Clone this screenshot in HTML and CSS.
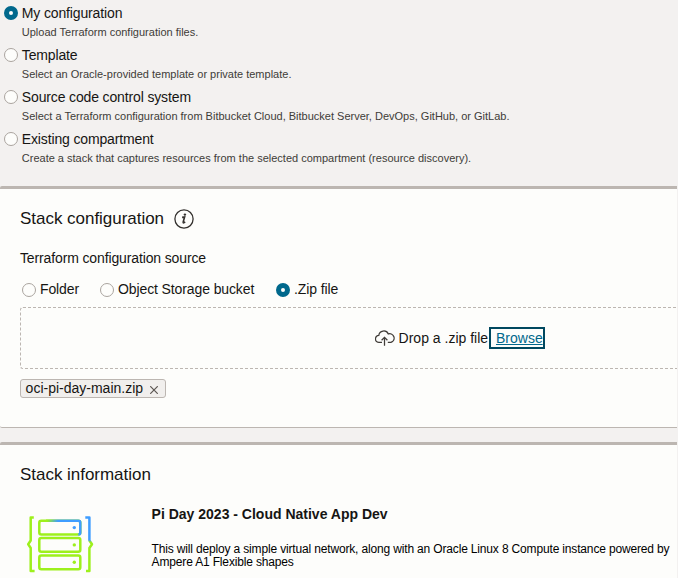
FILE: index.html
```
<!DOCTYPE html>
<html lang="en">
<head>
<meta charset="utf-8">
<title>Create stack</title>
<link rel="stylesheet" href="styles.css">
</head>
<body>
<main class="page">
  <section class="origins">
    <div class="origin"><span class="radio checked"></span><div><div class="name">My configuration</div><div class="hint">Upload Terraform configuration files.</div></div></div>
    <div class="origin"><span class="radio"></span><div><div class="name">Template</div><div class="hint">Select an Oracle-provided template or private template.</div></div></div>
    <div class="origin"><span class="radio"></span><div><div class="name">Source code control system</div><div class="hint">Select a Terraform configuration from Bitbucket Cloud, Bitbucket Server, DevOps, GitHub, or GitLab.</div></div></div>
    <div class="origin"><span class="radio"></span><div><div class="name">Existing compartment</div><div class="hint">Create a stack that captures resources from the selected compartment (resource discovery).</div></div></div>
  </section>
  <section class="card config">
    <div class="title-row">
      <h2 class="title">Stack configuration</h2>
      <svg class="info" width="20" height="20" viewBox="0 0 20 20"><circle cx="10" cy="10" r="9.1" fill="none" stroke="#34312e" stroke-width="1.3"/><path d="M8.1 8.4 10.6 8 9.2 13q-.2 1.1.6.8l1.4-1" fill="none" stroke="#34312e" stroke-width="1.6"/><circle cx="10.9" cy="5.6" r="1.2" fill="#34312e"/></svg>
    </div>
    <div class="label">Terraform configuration source</div>
    <div class="choices">
      <span class="choice folder"><span class="radio"></span><span>Folder</span></span>
      <span class="choice bucket"><span class="radio"></span><span>Object Storage bucket</span></span>
      <span class="choice zip"><span class="radio checked"></span><span>.Zip file</span></span>
    </div>
    <div class="drop">
      <svg class="cloud" width="20" height="16" viewBox="0 0 20 16" fill="none" stroke="#403c38" stroke-width="1.25"><path d="M7 12.4H4.1A3.5 3.5 0 0 1 3.8 5.4 5 5 0 0 1 13.3 3.9 4.3 4.3 0 0 1 16 12.4H12.8M9.5 15.8V7.4M6.6 10.2 9.5 7.3l2.9 2.9"/></svg>
      <span class="drop-text">Drop a .zip file</span><a class="browse" href="#">Browse</a>
    </div>
    <div class="chip"><span class="chip-name">oci-pi-day-main.zip</span><svg width="8" height="8" viewBox="0 0 8 8"><path d="M.2.2l7.6 7.6M7.8.2.2 7.8" stroke="#5c5752" stroke-width="1.2"/></svg></div>
  </section>
  <section class="card details">
    <h2 class="title">Stack information</h2>
    <div class="stack">
      <svg class="logo" width="68" height="58" viewBox="0 0 68 58" fill="none" stroke-linejoin="round">
        <defs>
          <linearGradient id="shelf" gradientUnits="userSpaceOnUse" x1="21" y1="5" x2="32" y2="5"><stop offset="0" stop-color="#9df01c"/><stop offset="1" stop-color="#3f9dff"/></linearGradient>
          <linearGradient id="brace" x1="0" y1="0" x2="0" y2="1"><stop offset=".42" stop-color="#3f9dff"/><stop offset=".46" stop-color="#9df01c"/></linearGradient>
        </defs>
        <g stroke="#9df01c" stroke-width="2.5">
          <path d="M7.8 2.5H4.7V25.5L2.2 29.3 4.7 33V56H8.6"/>
          <path d="M59.3 2.5H63.4V25.5L66 29.3 63.4 33V56H60" stroke="url(#brace)"/>
          <rect x="13.3" y="5.8" width="41" height="13.6" rx="2"/>
          <path d="M20 5.8H52.3Q54.3 5.8 54.3 7.8V17.4Q54.3 19.4 52.3 19.4" stroke="url(#shelf)"/>
          <rect x="13.3" y="23" width="41" height="13.8" rx="2"/>
          <rect x="13.3" y="40.5" width="41" height="13.8" rx="2"/>
        </g>
        <circle cx="48.3" cy="12.6" r="1.7" fill="#3f9dff"/><circle cx="48.3" cy="29.9" r="1.7" fill="#9df01c"/><circle cx="48.3" cy="47.3" r="1.7" fill="#9df01c"/>
      </svg>
      <div class="about">
        <h3 class="stack-name">Pi Day 2023 - Cloud Native App Dev</h3>
        <p class="summary">This will deploy a simple virtual network, along with an Oracle Linux 8 Compute instance powered by<br>Ampere A1 Flexible shapes</p>
      </div>
    </div>
  </section>
</main>
</body>
</html>
```
FILE: styles.css
```
* { box-sizing: border-box; }
body { margin: 0; background: #f3f1f0; color: #161513; font: 14px/20px "Liberation Sans", Arial, sans-serif; }
h2, h3, p { margin: 0; font-weight: normal; }
.page { width: 677px; height: 578px; overflow: hidden; }
.origins { height: 186px; padding: 3px 0 0 4px; }
.origin { display: flex; gap: 3.8px; height: 42px; }
.radio { flex: none; width: 14px; height: 14px; border: 1px solid #aaa49f; border-radius: 50%; background: #fdfdfb; }
.radio.checked { border: 5px solid #00688c; }
.origin .radio { margin-top: 3px; }
.name { height: 20px; letter-spacing: -0.14px; white-space: nowrap; }
.hint { height: 18px; font-size: 11px; line-height: 18px; color: #403c38; white-space: nowrap; }
.card { background: #fdfdfb; border-top: 3px solid #bcb6b1; padding-left: 20px; }
.config { height: 242px; border-bottom: 1px solid #bcb6b1; border-radius: 2px 0 0 2px; }
.title { font-size: 17px; line-height: 22px; letter-spacing: -0.03px; white-space: nowrap; }
.title-row { display: flex; align-items: center; gap: 10px; padding-top: 19px; height: 41px; }
.label { margin-top: 18px; height: 20px; letter-spacing: -0.13px; white-space: nowrap; }
.choices { display: flex; margin-top: 11px; height: 20px; padding-left: 2px; letter-spacing: -0.11px; }
.choice { display: flex; align-items: center; gap: 4px; white-space: nowrap; }
.folder { width: 78px; }
.bucket { width: 176px; }
.choice .radio { margin-top: 1px; }
.drop { display: flex; align-items: center; margin-top: 8px; height: 62px; border: 1px dashed #bcb6b1; border-right: 0; border-radius: 3px 0 0 3px; padding-left: 354px; }
.drop-text { margin-left: 3.6px; width: 90.4px; white-space: nowrap; }
.browse { width: 56px; height: 22px; border: 2px solid #00485f; padding-left: 5px; line-height: 19px; color: #00688c; white-space: nowrap; }
.chip { display: flex; align-items: center; margin-top: 10px; width: 146px; height: 19px; border: 1px solid #bcb6b1; border-radius: 3px; background: #f1efed; padding-left: 4.6px; }
.chip-name { width: 124.4px; white-space: nowrap; line-height: 17px; }
.chip svg { margin-top: 3px; }
.details { margin-top: 14px; height: 136px; border-radius: 2px 0 0 0; padding-top: 19px; }
.stack { display: flex; margin-top: 29px; padding-left: 6px; }
.logo { flex: none; }
.about { flex: none; margin-left: 57.6px; }
.stack-name { margin-top: -11px; height: 20px; font-size: 14px; font-weight: bold; white-space: nowrap; }
.summary { margin-top: 19px; font-size: 12px; line-height: 13px; letter-spacing: -0.16px; color: #000; white-space: nowrap; }
```
